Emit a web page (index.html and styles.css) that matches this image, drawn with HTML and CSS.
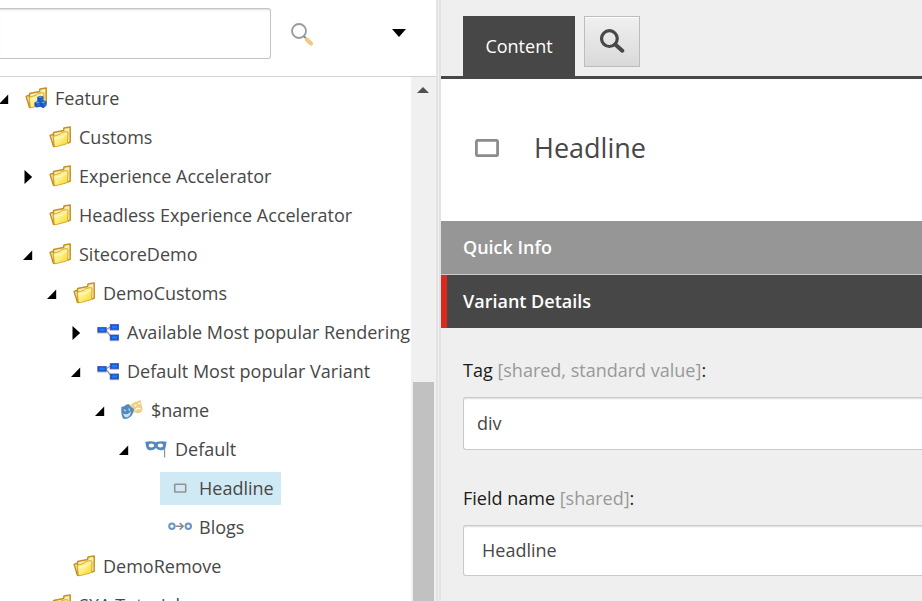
FILE: index.html
```html
<!DOCTYPE html>
<html lang="en">
<head>
<meta charset="utf-8">
<title>Content Editor</title>
<link rel="stylesheet" href="styles.css">
</head>
<body>
<svg class="defs" aria-hidden="true">
  <defs>
    <linearGradient id="gold" x1="0" y1="0" x2="1" y2="1">
      <stop offset="0" stop-color="#fff6b8"/>
      <stop offset=".5" stop-color="#fdee80"/>
      <stop offset="1" stop-color="#f6d420"/>
    </linearGradient>
    <symbol id="folder" viewBox="0 0 24 24">
      <path d="M2 10.3 4.6 9.3 6.6 12V21.6L5.4 21.3Z" fill="#f6e3a0" stroke="#c08d1e" stroke-width="1.3" stroke-linejoin="round"/>
      <path d="M5.6 20V7.6L15.6 5.4 16 2.9 22.2 1.9V17L19.6 18.4" fill="#fbedb9" stroke="#c4931f" stroke-width="1.5" stroke-linejoin="round"/>
      <path d="M5.4 12.6Q5.4 11.4 6.6 11L12 9.2 14 7.4 18.6 6.6Q20.1 6.5 20 8L19.6 17.2Q19.5 18.6 18.2 19L8.2 21.6Q6.4 22 6.2 20.2Z" fill="url(#gold)" stroke="#d8a92f" stroke-width="1"/>
      <path d="M7 13.2Q14.5 13.6 18.4 8.2" fill="none" stroke="#fffbd5" stroke-width="1"/>
    </symbol>
    <symbol id="feature" viewBox="0 0 24 24">
      <use href="#folder"/>
      <path d="M13.2 11 16 9.7 19.4 10.6V14.2L22.6 15.6V19.4L19.4 22.3 16.4 20.8 12.6 21.6 10.4 20V16.4L13.2 15Z" fill="#1a55bd"/>
      <path d="M13.8 11.3 16.2 10.3 18.6 11 16.2 12.1ZM11.2 16.6 13.6 15.5 15.8 16.3 13.2 17.4ZM17 16.4 19.4 15.2 21.8 16.3 19.4 17.6Z" fill="#5a9df2"/>
      <path d="M16.6 12.9 18.7 12V14.2L16.6 15ZM13.4 18.1 15.6 17.1V19.6L13.4 20.6ZM19.6 18.4 21.8 17.3V19.2L19.6 21.2Z" fill="#2a76dc"/>
    </symbol>
    <symbol id="tree" viewBox="0 0 24 24">
      <path d="M10 9.8 14.5 7M10 10.5 15 16.5" fill="none" stroke="#9a94b4" stroke-width="1.3"/>
      <path d="M1.2 13H10.6M13.6 10.3H22.8M13.6 20.7H22.8" stroke="#a9b7dc" stroke-width="1"/>
      <g fill="#1e4fce" stroke="#3a58b4" stroke-width=".8">
        <rect x="1.8" y="7.4" width="8.4" height="4.8"/>
        <rect x="14.2" y="4.6" width="8.4" height="5"/>
        <rect x="14.2" y="15" width="8.4" height="5"/>
      </g>
      <path d="M3.4 8.5H8.8V11H3.4ZM15.8 5.8H21V8.4H15.8ZM15.8 16.2H21V18.8H15.8Z" fill="#1481fa"/>
    </symbol>
    <symbol id="masks" viewBox="0 0 24 24">
      <path d="M10.6 6.4Q12.6 6 13.2 4.8 14.6 4.6 16.6 3.6 19 2.8 20.4 1.7L22.5 10.4Q22.3 14.4 18.6 15.1 15 15.5 12.5 13Z" fill="#f1ce86"/>
      <path d="M14.4 7.9 16.6 7M18.4 6 20.2 5.2M15.6 12.6Q16.8 9.2 20.4 10.8" fill="none" stroke="#fff" stroke-width="1.3"/>
      <path d="M1.4 8.8Q3.4 9 5 7.6 7.2 5.8 9.4 6.4 11 9.6 14 11 13.4 16.4 10.2 19 6.8 21.8 3 20.6 .8 17 1.4 8.8Z" fill="#5389bc"/>
      <path d="M3.8 11.6 6 13M8.6 10.6 9.8 12.6M4 16.6Q7.4 17.6 10.2 14.8 9.4 18.8 5.4 18.8Z" fill="#cfe2f3" stroke="#cfe2f3" stroke-width="1.1"/>
    </symbol>
    <symbol id="mask" viewBox="0 0 24 24">
      <path d="M20.6 10V20.6" stroke="#929292" stroke-width="1.2"/>
      <path fill-rule="evenodd" d="M1.3 4.8Q7 3.4 11.9 5.2 16.8 3.4 22.6 4.8L21.8 9.4Q20.8 13.3 16.8 13.3 13.8 13.2 11.9 11 10 13.2 7 13.3 3 13.3 2.1 9.4ZM4.7 8.6A2.7 2 0 1 0 10.1 8.6 2.7 2 0 1 0 4.7 8.6ZM13.7 8.6A2.7 2 0 1 0 19.1 8.6 2.7 2 0 1 0 13.7 8.6Z" fill="#5389bc"/>
    </symbol>
    <symbol id="box" viewBox="0 0 24 24">
      <rect x="6.7" y="8.2" width="11" height="7.8" rx=".6" fill="none" stroke="#929292" stroke-width="1.6"/>
    </symbol>
    <symbol id="link" viewBox="0 0 24 24">
      <circle cx="3.9" cy="11.3" r="2.7" fill="none" stroke="#6696c4" stroke-width="2"/>
      <circle cx="20.3" cy="11.3" r="2.7" fill="none" stroke="#6696c4" stroke-width="2"/>
      <path d="M7.5 11.3H15M11.7 8 15.2 11.3 11.7 14.6" fill="none" stroke="#888" stroke-width="1.5"/>
    </symbol>
    <symbol id="open" viewBox="0 0 10 16"><path d="M9.2 3.5V13H0Z"/></symbol>
    <symbol id="closed" viewBox="0 0 10 16"><path d="M1.5 1 9.2 8 1.5 15Z"/></symbol>
  </defs>
</svg>
<div class="app">
  <aside class="sidebar">
    <div class="search">
      <div class="search-input"></div>
      <svg class="search-icon" viewBox="0 0 24 24">
        <circle cx="9" cy="8" r="7" fill="#fff" stroke="#999" stroke-width="1.8"/>
        <path d="M13.6 13 16 15.4" stroke="#888" stroke-width="1.8"/>
        <path d="M17 16.8 21 20.6" stroke="#f0ca7d" stroke-width="4.2" stroke-linecap="round"/>
      </svg>
      <svg class="search-menu" viewBox="0 0 14 8"><path d="M0 0H14L7 8Z"/></svg>
    </div>
    <div class="tree-area">
      <ul class="tree">
        <li class="l0"><svg class="arrow"><use href="#open"/></svg><span class="node"><svg class="icon"><use href="#feature"/></svg>Feature</span></li>
        <li class="l1"><svg class="arrow"></svg><span class="node"><svg class="icon"><use href="#folder"/></svg>Customs</span></li>
        <li class="l1"><svg class="arrow"><use href="#closed"/></svg><span class="node"><svg class="icon"><use href="#folder"/></svg>Experience Accelerator</span></li>
        <li class="l1"><svg class="arrow"></svg><span class="node"><svg class="icon"><use href="#folder"/></svg>Headless Experience Accelerator</span></li>
        <li class="l1"><svg class="arrow"><use href="#open"/></svg><span class="node"><svg class="icon"><use href="#folder"/></svg>SitecoreDemo</span></li>
        <li class="l2"><svg class="arrow"><use href="#open"/></svg><span class="node"><svg class="icon"><use href="#folder"/></svg>DemoCustoms</span></li>
        <li class="l3"><svg class="arrow"><use href="#closed"/></svg><span class="node"><svg class="icon"><use href="#tree"/></svg>Available Most popular Rendering</span></li>
        <li class="l3"><svg class="arrow"><use href="#open"/></svg><span class="node"><svg class="icon"><use href="#tree"/></svg>Default Most popular Variant</span></li>
        <li class="l4"><svg class="arrow"><use href="#open"/></svg><span class="node"><svg class="icon"><use href="#masks"/></svg>$name</span></li>
        <li class="l5"><svg class="arrow"><use href="#open"/></svg><span class="node"><svg class="icon"><use href="#mask"/></svg>Default</span></li>
        <li class="l6"><svg class="arrow"></svg><span class="node selected"><svg class="icon"><use href="#box"/></svg>Headline</span></li>
        <li class="l6"><svg class="arrow"></svg><span class="node"><svg class="icon"><use href="#link"/></svg>Blogs</span></li>
        <li class="l2"><svg class="arrow"></svg><span class="node"><svg class="icon"><use href="#folder"/></svg>DemoRemove</span></li>
        <li class="l1"><svg class="arrow"></svg><span class="node"><svg class="icon"><use href="#folder"/></svg>SXA Tutorials</span></li>
      </ul>
      <div class="scrollbar">
        <svg class="scroll-up" viewBox="0 0 12 6"><path d="M6 0 12 6H0Z" fill="#505050"/></svg>
        <div class="thumb"></div>
      </div>
    </div>
  </aside>
  <div class="splitter"></div>
  <main class="editor">
    <nav class="tabs">
      <div class="tab">Content</div>
      <div class="tab-button">
        <svg viewBox="0 0 26 26"><circle cx="10.4" cy="9.6" r="7.9" fill="none" stroke="#474747" stroke-width="3.2"/><path d="M16.3 15.6 23.3 21.7" stroke="#474747" stroke-width="4" stroke-linecap="round"/></svg>
      </div>
    </nav>
    <header class="title">
      <svg viewBox="0 0 24 18"><rect x="1.4" y="1.3" width="21.2" height="15.4" rx="1.5" fill="none" stroke="#8c8c8c" stroke-width="2.8"/></svg>
      <h1>Headline</h1>
    </header>
    <h2 class="section">Quick Info</h2>
    <h2 class="section active">Variant Details</h2>
    <div class="fields">
      <div class="label">Tag <span>[shared, standard value]</span>:</div>
      <div class="field">div</div>
      <div class="label second">Field name <span>[shared]</span>:</div>
      <div class="field narrow">Headline</div>
    </div>
  </main>
</div>
</body>
</html>
```
FILE: styles.css
```css
* { box-sizing: border-box; }
body {
  margin: 0;
  font: 18px/24px "Open Sans", sans-serif;
  color: #474747;
  background: #fff;
}
svg { display: block; flex: none; }
.defs { position: absolute; width: 0; height: 0; }
.app { display: flex; width: 100%; height: 601px; overflow: hidden; }

.sidebar { width: 436px; flex: none; display: flex; flex-direction: column; }
.search {
  height: 77px;
  flex: none;
  display: flex;
  border-bottom: 1px solid #d3d3d3;
}
.search-input {
  width: 271px;
  height: 51px;
  margin-top: 8px;
  border: 1px solid #c4c4c4;
  border-left: 0;
  border-radius: 0 3px 3px 0;
  box-shadow: inset 0 2px 2px -1px #ddd;
}
.search-icon { width: 24px; height: 24px; margin: 23px 0 0 19px; }
.search-menu { width: 14px; height: 8px; margin: 29px 0 0 78px; }

.tree-area { flex: 1; min-height: 0; display: flex; }
.tree {
  width: 411px;
  margin: 0;
  padding: 2px 0 0;
  list-style: none;
  overflow: hidden;
  white-space: nowrap;
}
.tree li { height: 39px; display: flex; align-items: center; }
.l1 { padding-left: 23px; }
.l2 { padding-left: 47px; }
.l3 { padding-left: 71px; }
.l4 { padding-left: 95px; }
.l5 { padding-left: 119px; }
.l6 { padding-left: 143px; }
.arrow { width: 10px; height: 16px; flex: none; margin: 1px 7px 0 0; }
.l0 .arrow { margin-left: -1px; }
.tree .node {
  height: 33px;
  display: flex;
  align-items: center;
  padding: 0 7px 2px 8px;
}
.icon { width: 24px; height: 24px; margin: 1px 7px 0 0; }
.selected { background: #d0eaf5; }

.scrollbar { width: 25px; background: #f0f0f0; }
.scroll-up { width: 12px; height: 6px; margin: 10px 0 0 6px; }
.thumb { width: 21px; height: 300px; margin: 289px 0 0 2px; background: #c1c1c1; }

.splitter {
  width: 5px;
  flex: none;
  background: #efefef;
  border: solid #e3e3e3;
  border-width: 0 2px;
}

.editor { flex: 1; min-width: 0; background: #efefef; }
.tabs {
  height: 79px;
  display: flex;
  gap: 9px;
  padding: 16px 0 0 22px;
  border-bottom: 3px solid #474747;
}
.tab {
  width: 112px;
  height: 60px;
  line-height: 60px;
  text-align: center;
  color: #fff;
  background: #474747;
}
.tab-button {
  width: 56px;
  height: 51px;
  padding: 12px 0 0 14px;
  border: 1px solid #bdbdbd;
  background: linear-gradient(#f0f0f0, #d9d9d9);
  box-shadow: inset 0 1px #fff;
}
.tab-button svg { width: 26px; height: 26px; }
.title {
  height: 142px;
  display: flex;
  align-items: center;
  padding: 0 0 4px 34px;
  background: #fff;
}
.title svg { width: 24px; height: 18px; }
h1 { margin: 0 0 0 35px; font-size: 27px; line-height: 38px; font-weight: 400; }
.section {
  height: 53px;
  margin: 0;
  padding-left: 22px;
  font-size: 18px;
  line-height: 53px;
  font-weight: 600;
  color: #fff;
  background: #969696;
}
.active {
  margin-top: 1px;
  padding-left: 16px;
  border-left: 6px solid #dc291e;
  background: #474747;
  box-shadow: 0 -1px #ccc;
}
.fields { padding: 30px 0 0 22px; }
.label { height: 24px; color: #1a1a1a; }
.label span { color: #999; }
.second { margin-top: 36px; }
.field {
  height: 53px;
  margin-top: 15px;
  padding-left: 13px;
  line-height: 51px;
  background: #fff;
  border: 1px solid #c9c9c9;
  border-right: 0;
  border-radius: 3px 0 0 3px;
  box-shadow: inset 0 2px 2px -1px #ddd;
}
.narrow { height: 51px; padding-left: 18px; line-height: 49px; }
```
